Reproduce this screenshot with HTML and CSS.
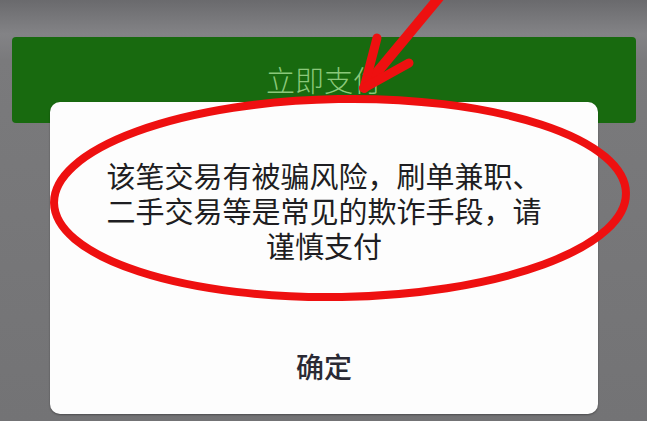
FILE: index.html
```html
<!DOCTYPE html>
<html lang="zh-CN">
<head>
<meta charset="utf-8">
<title>支付提示</title>
<link rel="stylesheet" href="styles.css">
</head>
<body>
<div class="screen">
  <div class="pay-btn">立即支付</div>
  <div class="dialog">
    <p class="dialog-msg">该笔交易有被骗风险，刷单兼职、二手交易等是常见的欺诈手段，请谨慎支付</p>
    <div class="dialog-ok">确定</div>
  </div>
  <svg class="marks" width="647" height="421" viewBox="0 0 647 421" xmlns="http://www.w3.org/2000/svg">
    <ellipse cx="340" cy="198" rx="286" ry="99" fill="none" stroke="#ee1010" stroke-width="8" transform="rotate(-1 340 198)"/>
    <g stroke="#ee1010" stroke-linecap="round" fill="none">
      <path d="M442 -6 L364 88" stroke-width="10"/>
      <path d="M364 88 L377 38" stroke-width="9"/>
      <path d="M364 88 L409 63" stroke-width="9"/>
    </g>
  </svg>
</div>
</body>
</html>
```

FILE: styles.css
```css
html, body {
  margin: 0;
  padding: 0;
}
body {
  width: 647px;
  height: 421px;
  overflow: hidden;
  background: linear-gradient(to bottom, #6a6a6d 0px, #838386 34px, #7a7a7c 60px, #737375 421px);
  font-family: "Noto Sans CJK SC", "Noto Sans", sans-serif;
}
.screen {
  position: relative;
  width: 647px;
  height: 421px;
  padding-top: 37px;
  box-sizing: border-box;
}
.pay-btn {
  margin: 0 11px 0 12px;
  height: 86px;
  background: #186a0f;
  border-radius: 4px;
  color: #8bc87a;
  font-size: 29px;
  font-weight: 300;
  display: flex;
  align-items: center;
  justify-content: center;
  padding-bottom: 3px;
  box-sizing: border-box;
}
.dialog {
  margin: -21px 49px 0 50px;
  height: 312px;
  box-sizing: border-box;
  background: #fdfdfd;
  border-radius: 10px;
  box-shadow: 0 1px 2px rgba(0,0,0,0.35);
  padding: 56px 56px 0;
  position: relative;
}
.dialog-msg {
  margin: 0;
  font-size: 29px;
  line-height: 35px;
  color: #1e1e22;
  text-align: center;
}
.dialog-ok {
  margin-top: 86px;
  font-size: 28px;
  line-height: 34px;
  font-weight: 500;
  color: #2a2a34;
  text-align: center;
}
.marks {
  position: absolute;
  left: 0;
  top: 0;
  pointer-events: none;
}
```
